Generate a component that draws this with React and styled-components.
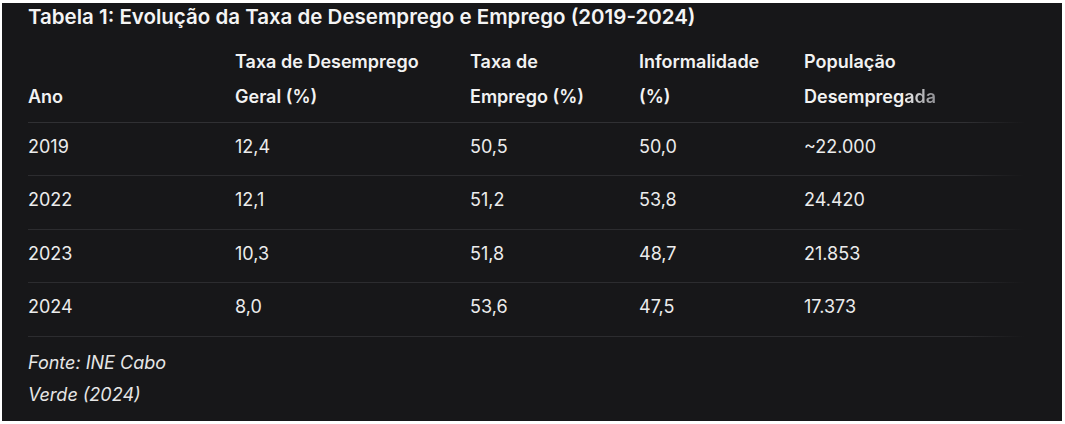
import React from 'react';
import styled, { createGlobalStyle } from 'styled-components';

/* Data ---------------------------*/
const columns = [
    { key: 'ano', label: ['Ano'], width: 207 },
    { key: 'desemprego', label: ['Taxa de Desemprego', 'Geral (%)'], width: 235 },
    { key: 'emprego', label: ['Taxa de', 'Emprego (%)'], width: 169 },
    { key: 'informalidade', label: ['Informalidade', '(%)'], width: 165 },
    { key: 'populacao', label: ['População', 'Desempregada'], width: 221 },
];

const rows = [
    ['2019', '12,4', '50,5', '50,0', '~22.000'],
    ['2022', '12,1', '51,2', '53,8', '24.420'],
    ['2023', '10,3', '51,8', '48,7', '21.853'],
    ['2024', '8,0', '53,6', '47,5', '17.373'],
];

const GlobalStyle = createGlobalStyle`
    html, body {
        margin: 0;
        padding: 0;
        background: #ffffff;
    }
    body {
        font-family: Inter, "Noto Sans", "Liberation Sans", sans-serif;
        -webkit-font-smoothing: antialiased;
    }
`;

const App = () => {
    return (
        <>
            <GlobalStyle />
            <Panel>
                <Title>Tabela 1: Evolução da Taxa de Desemprego e Emprego (2019-2024)</Title>
                <TableWrap>
                    <Table>
                        <colgroup>
                            { columns.map((col) => <col key={ col.key } style={{ width: col.width }} />) }
                        </colgroup>
                        <thead>
                            <tr>
                                { columns.map((col) => (
                                    <HeadCell key={ col.key }>
                                        { col.label.map((line, i) => (
                                            <HeadLine key={ i }>
                                                { line === 'Desempregada'
                                                    ? <>Desempreg<Fading>ada</Fading></>
                                                    : line }
                                            </HeadLine>
                                        )) }
                                    </HeadCell>
                                )) }
                            </tr>
                        </thead>
                        <tbody>
                            { rows.map((row) => (
                                <tr key={ row[0] }>
                                    { row.map((value, i) => <Cell key={ i }>{ value }</Cell>) }
                                </tr>
                            )) }
                        </tbody>
                        <tfoot>
                            <tr>
                                <Note>Fonte: INE Cabo Verde (2024)</Note>
                                <td colSpan={ 4 } />
                            </tr>
                        </tfoot>
                    </Table>
                    <EdgeFade />
                </TableWrap>
            </Panel>
        </>
    );
}

export default App;

/* Styles ---------------------------*/
const Panel = styled.div`
    margin: 3px 3px 3px 2px;
    width: 1060px;
    height: 418px;
    box-sizing: border-box;
    background: #171719;
    padding: 0 0 0 26px;
    color: #ececec;
    overflow: hidden;
`;

const Title = styled.h3`
    margin: 0;
    font-size: 20.5px;
    line-height: 28px;
    font-weight: 600;
    color: #f4f4f4;
    white-space: nowrap;
`;

const TableWrap = styled.div`
    position: relative;
    width: 997px;
    margin-top: 13px;
`;

const Table = styled.table`
    width: 997px;
    table-layout: fixed;
    border-collapse: collapse;
    font-size: 18px;
`;

const HeadCell = styled.th`
    vertical-align: bottom;
    text-align: left;
    font-weight: 600;
    color: #f2f2f2;
    padding: 0 16px 7.5px 0;
    border-bottom: 1px solid #303033;
`;

const HeadLine = styled.div`
    line-height: 35px;
    white-space: nowrap;
`;

const Fading = styled.span`
    background: linear-gradient(90deg, #f2f2f2 0%, #8e8e92 100%);
    -webkit-background-clip: text;
    background-clip: text;
    color: transparent;
`;

const Cell = styled.td`
    padding: 10px 16px 14.5px 0;
    line-height: 28px;
    color: #ececec;
    border-bottom: 1px solid #2c2c2f;
`;

const Note = styled.td`
    padding: 10px 30px 0 0;
    line-height: 32px;
    font-style: italic;
    color: #e6e6e6;
`;

const EdgeFade = styled.div`
    position: absolute;
    top: 0;
    right: 0;
    width: 60px;
    height: 100%;
    pointer-events: none;
    background: linear-gradient(90deg, rgba(23, 23, 25, 0) 0%, #171719 100%);
`;
